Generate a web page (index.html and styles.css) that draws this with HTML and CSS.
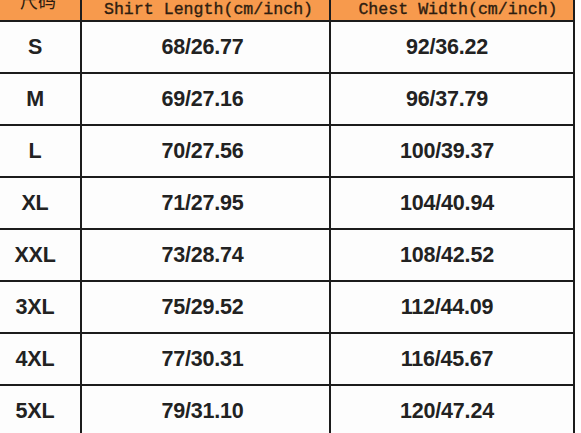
FILE: index.html
```html
<!DOCTYPE html>
<html>
<head>
<meta charset="utf-8">
<link rel="stylesheet" href="styles.css">
</head>
<body>
<div class="chart">
  <div class="cell head head-size"><span>尺码</span></div>
  <div class="cell head">Shirt Length(cm/inch)</div>
  <div class="cell head head-chest">Chest Width(cm/inch)</div>

  <div class="cell size">S</div><div class="cell c2">68/26.77</div><div class="cell c3">92/36.22</div>
  <div class="cell size">M</div><div class="cell c2">69/27.16</div><div class="cell c3">96/37.79</div>
  <div class="cell size">L</div><div class="cell c2">70/27.56</div><div class="cell c3">100/39.37</div>
  <div class="cell size">XL</div><div class="cell c2">71/27.95</div><div class="cell c3">104/40.94</div>
  <div class="cell size">XXL</div><div class="cell c2">73/28.74</div><div class="cell c3">108/42.52</div>
  <div class="cell size">3XL</div><div class="cell c2">75/29.52</div><div class="cell c3">112/44.09</div>
  <div class="cell size">4XL</div><div class="cell c2">77/30.31</div><div class="cell c3">116/45.67</div>
  <div class="cell size">5XL</div><div class="cell c2">79/31.10</div><div class="cell c3">120/47.24</div>
</div>
</body>
</html>
```
FILE: styles.css
```css
html, body {
  margin: 0;
  padding: 0;
  background: #ffffff;
  overflow: hidden;
}

.chart {
  display: grid;
  grid-template-columns: 90px 247px 242px;
  grid-template-rows: 32px repeat(8, 50px);
  gap: 2px;
  background: #1c1c1c;
  padding: 0 2px 2px 2px;
  width: max-content;
  margin-top: -12px;
  margin-left: -12px;
}

.cell {
  background: #fdfdfd;
  display: flex;
  align-items: center;
  justify-content: center;
  font-family: "Liberation Sans", Arial, sans-serif;
  font-weight: bold;
  font-size: 21.5px;
  color: #222222;
  letter-spacing: -0.2px;
  padding-top: 1px;
}

.c2 {
  padding-right: 6px;
}

.c3 {
  padding-right: 10px;
}

.head {
  background: #f79a4d;
  font-family: "Liberation Mono", "Courier New", monospace;
  font-weight: normal;
  font-size: 16.6px;
  letter-spacing: 0;
  color: #2e1d10;
  -webkit-text-stroke: 0.35px #2e1d10;
  align-items: flex-end;
  padding-top: 0;
  padding-bottom: 1px;
  padding-left: 6px;
}

.head-chest {
  padding-left: 12px;
}

.head-size {
  font-family: "Noto Sans CJK SC", sans-serif;
  font-size: 18px;
  -webkit-text-stroke: 0;
  padding-left: 6px;
  padding-bottom: 0;
  overflow: hidden;
}

.head-size span {
  display: block;
  line-height: 1;
  margin-bottom: 11px;
}
```
